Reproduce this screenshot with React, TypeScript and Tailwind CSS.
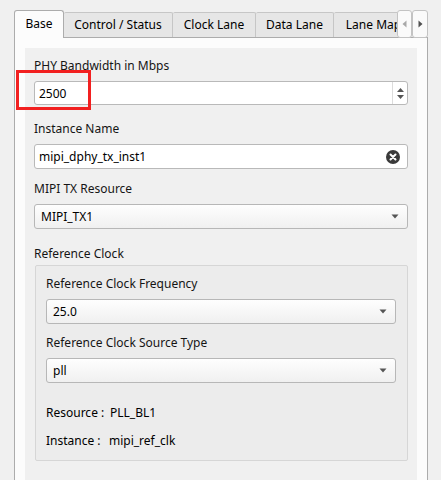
import React from "react";

function Caret({ className = "" }: { className?: string }) {
  return (
    <svg width="8" height="5" viewBox="0 0 8 5" className={className}>
      <path d="M0.5 0.5 L7.5 0.5 L4 4.5 Z" fill="#555" />
    </svg>
  );
}

function Label({ children, className = "" }: { children: React.ReactNode; className?: string }) {
  return <div className={"h-[17px] leading-[17px] text-[#151515] " + className}>{children}</div>;
}

function Combo({ value, className = "" }: { value: string; className?: string }) {
  return (
    <div
      className={
        "h-[25px] flex items-center justify-between pl-[6px] pr-[8px] rounded-[3px] border border-[#b7b7b7] bg-gradient-to-b from-[#fefefe] to-[#f0f0f0] " +
        className
      }
    >
      <span className="leading-[17px]">{value}</span>
      <Caret />
    </div>
  );
}

export default function App() {
  const tabs = [
    { t: "Control / Status", w: "w-[109px]" },
    { t: "Clock Lane", w: "w-[83px]" },
    { t: "Data Lane", w: "w-[78px]" },
    { t: "Lane Map", w: "w-[80px]" },
  ];
  return (
    <div className="relative w-[441px] h-[480px] overflow-hidden bg-[#f0f0f0] font-['Noto_Sans',sans-serif] text-[12px] text-black">
      <div className="pl-[14px] pt-[10px]">
        {/* tab bar */}
        <div className="flex items-end h-[27px] w-[414px] relative z-10">
          <div className="flex items-end w-[383px] h-[27px] overflow-x-clip">
            <div className="shrink-0 w-[50px] h-[28px] -mb-px bg-[#fcfcfc] border border-b-0 border-[#acacac] rounded-t-[3px] flex items-center justify-center pb-[1px]">
              Base
            </div>
            {tabs.map((x) => (
              <div
                key={x.t}
                className={
                  "shrink-0 h-[25px] bg-[#e6e6e6] border border-l-0 border-b-0 border-[#c6c6c6] rounded-t-[2px] flex items-center justify-center whitespace-nowrap " +
                  x.w
                }
              >
                {x.t}
              </div>
            ))}
          </div>
          <div className="flex h-[28px] -mb-px">
            <div className="w-[15px] h-[28px] bg-[#fafafa] border border-[#c3c3c3] rounded-[3px] flex items-center justify-center">
              <svg width="5" height="8" viewBox="0 0 5 8">
                <path d="M4.5 0.5 L4.5 7.5 L0.5 4 Z" fill="#a8a8a8" />
              </svg>
            </div>
            <div className="w-[16px] h-[28px] bg-[#fafafa] border border-[#c3c3c3] rounded-[3px] flex items-center justify-center">
              <svg width="5" height="8" viewBox="0 0 5 8">
                <path d="M0.5 0.5 L0.5 7.5 L4.5 4 Z" fill="#505050" />
              </svg>
            </div>
          </div>
        </div>
        {/* panel */}
        <div className="w-[414px] h-[460px] border border-[#acacac] bg-[#fcfcfc] px-[10px] pt-[10px]">
          <div className="h-[460px] bg-[#f0f0f0] px-[9px] flex flex-col">
            <Label className="mt-[9px]">PHY Bandwidth in Mbps</Label>
            <div className="mt-[7px] h-[24px] flex items-center bg-white border border-[#b9b9b9] rounded-[3px]">
              <span className="flex-1 pl-[4px] leading-[17px]">2500</span>
              <div className="w-[15px] h-full border-l border-[#dcdcdc] flex flex-col items-center justify-center gap-[3px]">
                <svg width="7" height="4" viewBox="0 0 7 4">
                  <path d="M0 4 L7 4 L3.5 0 Z" fill="#555" />
                </svg>
                <svg width="7" height="4" viewBox="0 0 7 4">
                  <path d="M0 0 L7 0 L3.5 4 Z" fill="#555" />
                </svg>
              </div>
            </div>

            <Label className="mt-[15px]">Instance Name</Label>
            <div className="mt-[7px] h-[25px] flex items-center justify-between bg-white border border-[#b9b9b9] rounded-[3px] pl-[4px] pr-[7px]">
              <span className="leading-[17px]">mipi_dphy_tx_inst1</span>
              <svg width="14" height="14" viewBox="0 0 14 14">
                <circle cx="7" cy="7" r="7" fill="#3a3a3a" />
                <path d="M4.5 4.5 L9.5 9.5 M9.5 4.5 L4.5 9.5" stroke="#fff" strokeWidth="2" strokeLinecap="round" />
              </svg>
            </div>

            <Label className="mt-[11px]">MIPI TX Resource</Label>
            <Combo value="MIPI_TX1" className="mt-[7px] pl-[4px]" />

            <Label className="mt-[16px]">Reference Clock</Label>
            <div className="mt-[3px] ml-px w-[373px] h-[196px] bg-[#ececec] border border-[#d6d6d6] rounded-[2px] pl-[10px] pr-[11px] flex flex-col">
              <Label className="mt-[9px]">Reference Clock Frequency</Label>
              <Combo value="25.0" className="mt-[7px] pl-[5px]" />
              <Label className="mt-[10px]">Reference Clock Source Type</Label>
              <Combo value="pll" className="mt-[7px] pl-[5px]" />
              <div className="mt-[21px] flex h-[17px] leading-[17px]">
                <span className="w-[64px]">Resource :</span>
                <span>PLL_BL1</span>
              </div>
              <div className="mt-[11px] flex h-[17px] leading-[17px]">
                <span className="w-[63px]">Instance :</span>
                <span>mipi_ref_clk</span>
              </div>
            </div>
          </div>
        </div>
      </div>
      {/* red highlight */}
      <div className="absolute left-[16px] top-[70px] w-[75px] h-[40px] border-[3px] border-[#f22020]" />
    </div>
  );
}
